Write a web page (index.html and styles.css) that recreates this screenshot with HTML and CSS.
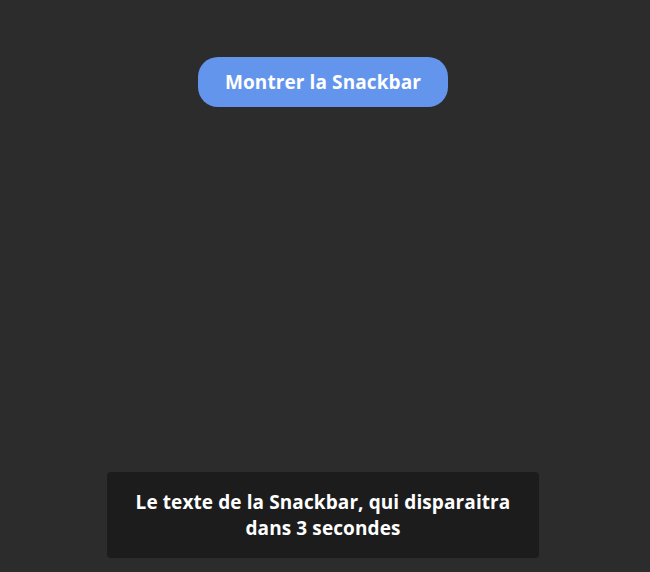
FILE: index.html
```html
<!DOCTYPE html>
<html lang="fr">
<head>
<meta charset="utf-8">
<title>Snackbar</title>
<link rel="stylesheet" href="styles.css">
</head>
<body>
<main class="page">
  <button class="show-btn" type="button">Montrer la Snackbar</button>
</main>
<div class="snackbar"><p class="snackbar-text">Le texte de la Snackbar, qui disparaitra dans 3 secondes</p></div>
</body>
</html>
```
FILE: styles.css
```css
html, body {
  margin: 0;
  padding: 0;
  height: 100%;
}
body {
  background: #2c2c2c;
  font-family: "Open Sans", "Lato", sans-serif;
  color: #fff;
}
.page {
  display: flex;
  flex-direction: column;
  align-items: center;
  padding-top: 57px;
  padding-right: 4px;
}
.show-btn {
  width: 250px;
  height: 50px;
  border: none;
  border-radius: 20px;
  background: #6495ed;
  color: #fff;
  font-family: inherit;
  font-weight: 700;
  font-size: 19px;
  letter-spacing: 0.1px;
  cursor: pointer;
}
.snackbar {
  position: fixed;
  left: 107px;
  bottom: 14px;
  width: 432px;
  height: 86px;
  display: flex;
  align-items: center;
  justify-content: center;
  background: #1c1c1c;
  border-radius: 4px;
}
.snackbar-text {
  margin: 0;
  max-width: 400px;
  text-align: center;
  font-weight: 700;
  font-size: 19px;
  letter-spacing: 0.1px;
  line-height: 26px;
}
```
